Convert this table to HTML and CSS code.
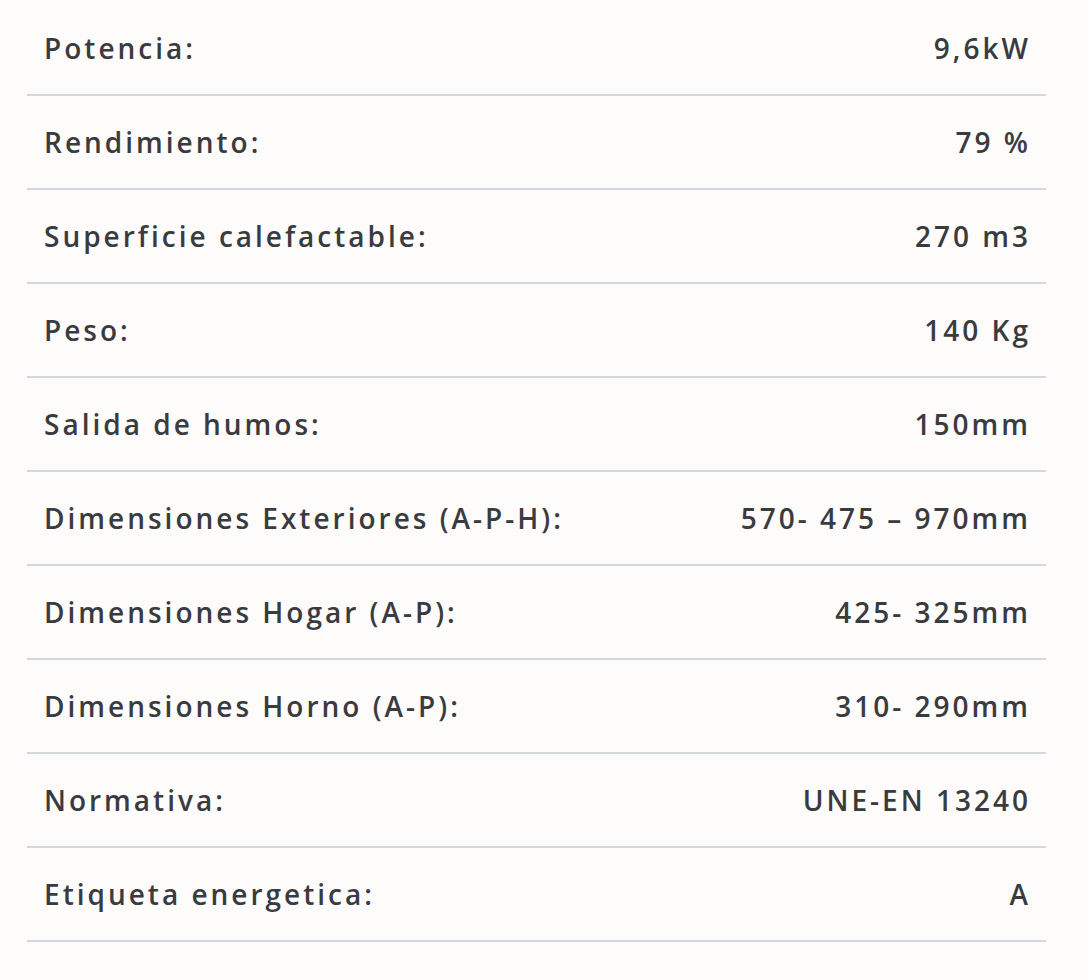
FILE: index.html
```html
<!DOCTYPE html>
<html lang="es">
<head>
<meta charset="utf-8">
<title>Especificaciones</title>
<link rel="stylesheet" href="styles.css">
</head>
<body>
<div class="specs">
  <div class="row"><span class="label">Potencia:</span><span class="value">9,6kW</span></div>
  <div class="row"><span class="label">Rendimiento:</span><span class="value">79 %</span></div>
  <div class="row"><span class="label">Superficie calefactable:</span><span class="value">270 m3</span></div>
  <div class="row"><span class="label">Peso:</span><span class="value">140 Kg</span></div>
  <div class="row"><span class="label">Salida de humos:</span><span class="value">150mm</span></div>
  <div class="row"><span class="label">Dimensiones Exteriores (A-P-H):</span><span class="value">570- 475 – 970mm</span></div>
  <div class="row"><span class="label">Dimensiones Hogar (A-P):</span><span class="value">425- 325mm</span></div>
  <div class="row"><span class="label">Dimensiones Horno (A-P):</span><span class="value">310- 290mm</span></div>
  <div class="row"><span class="label">Normativa:</span><span class="value">UNE-EN 13240</span></div>
  <div class="row"><span class="label">Etiqueta energetica:</span><span class="value">A</span></div>
</div>
</body>
</html>
```
FILE: styles.css
```css
html, body {
  margin: 0;
  padding: 0;
  background: #fdfcfb;
}
body {
  font-family: "Open Sans", "Liberation Sans", sans-serif;
  color: #3a3b3f;
}
.specs {
  width: 1019px;
  margin-left: 27px;
  padding-top: 2px;
  display: flex;
  flex-direction: column;
}
.row {
  display: flex;
  justify-content: space-between;
  align-items: center;
  height: 92px;
  padding: 0 18px 0 17px;
  border-bottom: 2px solid #d5d8dc;
  font-size: 28px;
  font-weight: 600;
  letter-spacing: 3px;
}
.value {
  margin-right: -3px;
}
```
